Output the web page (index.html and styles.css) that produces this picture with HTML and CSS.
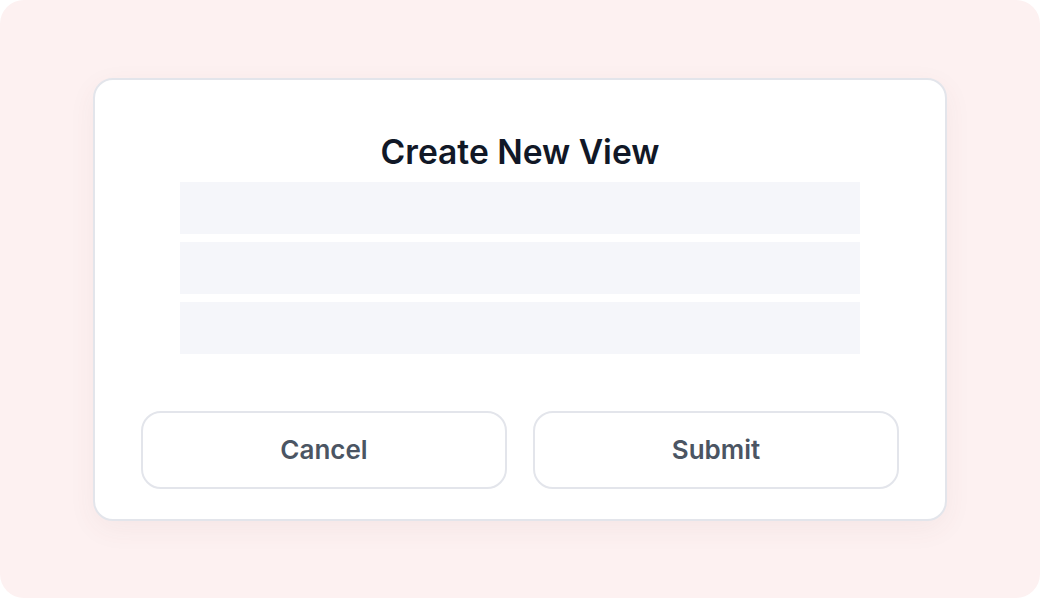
FILE: index.html
```html
<!DOCTYPE html>
<html lang="en">
<head>
  <meta charset="UTF-8">
  <meta name="viewport" content="width=device-width, initial-scale=1">
  <title>Create New View</title>
  <link rel="stylesheet" href="styles.css">
</head>
<body>

  <div class="backdrop">
    <div class="modal">
      <h2>Create New View</h2>

      <!-- Placeholder fields -->
      <div class="fields">
        <div class="field"></div>
        <div class="field"></div>
        <div class="field"></div>
      </div>

      <div class="actions">
        <button class="btn">Cancel</button>
        <button class="btn">Submit</button>
      </div>
    </div>
  </div>

</body>
</html>
```

FILE: styles.css
```css
body {
  margin: 0;
  background-color: #fff;
  font-family: Inter, "Noto Sans", sans-serif;
}

.backdrop {
  width: 1040px;
  height: 598px;
  background-color: #fdf1f1;
  border-radius: 24px;
  display: flex;
  align-items: center;
  justify-content: center;
}

.modal {
  width: 854px;
  height: 443px;
  box-sizing: border-box;
  background-color: #fff;
  border: 2px solid #e3e5eb;
  border-radius: 20px;
  box-shadow: 0 8px 28px rgba(120, 60, 60, 0.06);
  padding: 50px 46px 30px;
  display: flex;
  flex-direction: column;
}

.modal h2 {
  margin: 0 0 8px;
  text-align: center;
  font-size: 33.6px;
  line-height: 44px;
  font-weight: 600;
  color: #111827;
}

.fields {
  width: 680px;
  margin: 0 auto;
  display: flex;
  flex-direction: column;
  gap: 8px;
}

.field {
  height: 52px;
  background-color: #f5f6fa;
}

.actions {
  margin-top: auto;
  display: flex;
  gap: 26px;
}

.btn {
  flex: 1;
  height: 78px;
  background-color: #fff;
  border: 2px solid #e3e5eb;
  border-radius: 20px;
  font-family: inherit;
  font-size: 26px;
  font-weight: 600;
  color: #4b5563;
  cursor: pointer;
}
```
